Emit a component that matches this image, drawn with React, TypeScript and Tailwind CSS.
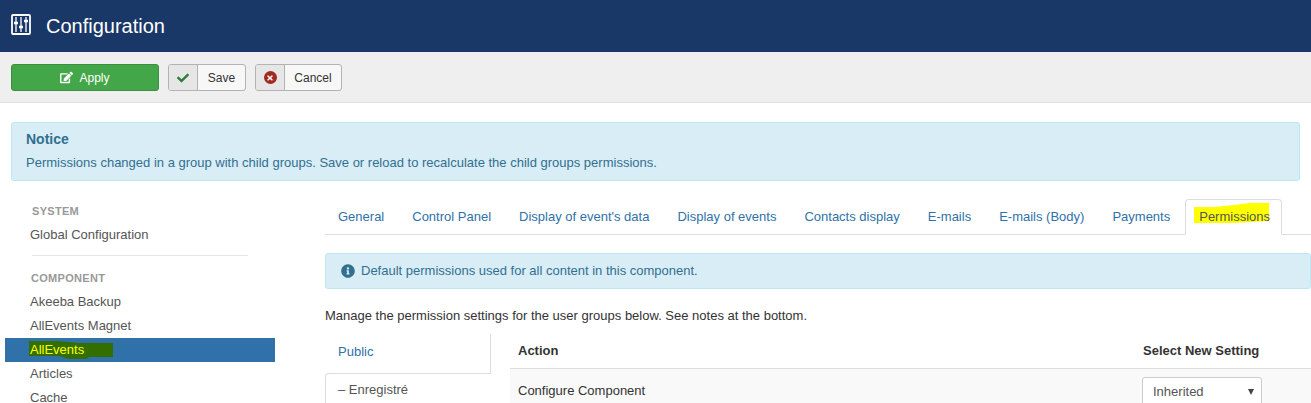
import React from "react";
import { FaCheck, FaEdit, FaTimes, FaInfoCircle } from "react-icons/fa";

const tabs = ["General", "Control Panel", "Display of event's data", "Display of events", "Contacts display", "E-mails", "E-mails (Body)", "Payments"];

function Item({ children }: { children: React.ReactNode }) {
  return <div className="h-6 leading-6 pl-[25px] text-[13px] text-[#555]">{children}</div>;
}

export default function App() {
  return (
    <div className="w-[1311px] h-[403px] overflow-hidden bg-white font-['Liberation_Sans',Arial,sans-serif] text-[13px] text-[#333]">
      <header className="h-[52px] bg-[#1a3867] flex items-center pl-[11px] text-white">
        <svg width="20" height="21" viewBox="0 0 20 21" fill="none" stroke="white" className="mb-[3px]">
          <rect x="1" y="1" width="18" height="19" rx="1" strokeWidth="1.8" />
          <path d="M5 3v15M10 3v15M15 3v15" strokeWidth="1.3" />
          <path d="M3 9h4M8 13h4M13 7h4" strokeWidth="2.4" />
        </svg>
        <h1 className="ml-[15px] text-[20px] leading-none font-normal">Configuration</h1>
      </header>

      <div className="h-[51px] bg-[#efefef] border-b border-[#e0e0e0] flex items-start pt-3 pl-[11px]">
        <button className="w-[148px] h-[27px] bg-[#43a648] border border-[#3b8f40] rounded-[3px] text-white text-xs flex items-center justify-center gap-[6px]">
          <FaEdit size={13} />
          Apply
        </button>
        <button className="ml-[9px] h-[27px] w-[78px] flex border border-[#b3b3b3] rounded-[3px] bg-[#f7f7f7] text-xs text-[#333] overflow-hidden">
          <span className="w-[29px] h-full bg-[#e6e6e6] border-r border-[#b3b3b3] flex items-center justify-center">
            <FaCheck size={12} className="text-[#2f7d3a]" />
          </span>
          <span className="flex-1 h-full flex items-center justify-center">Save</span>
        </button>
        <button className="ml-[9px] h-[27px] w-[87px] flex border border-[#b3b3b3] rounded-[3px] bg-[#f7f7f7] text-xs text-[#333] overflow-hidden">
          <span className="w-[29px] h-full bg-[#e6e6e6] border-r border-[#b3b3b3] flex items-center justify-center">
            <span className="w-[13px] h-[13px] rounded-full bg-[#a02a22] flex items-center justify-center">
              <FaTimes size={8} className="text-white" />
            </span>
          </span>
          <span className="flex-1 h-full flex items-center justify-center">Cancel</span>
        </button>
      </div>

      <div className="mt-[19px] mx-[11px] h-[59px] bg-[#d9edf7] border border-[#bce8f1] rounded-[3px] pl-[14px] pt-[7px] text-[#31708f]">
        <div className="text-[14px] leading-[18px] font-bold">Notice</div>
        <div className="mt-[5px] text-[13px] leading-[20px]">Permissions changed in a group with child groups. Save or reload to recalculate the child groups permissions.</div>
      </div>

      <div className="flex mt-[18px]">
        <aside className="ml-[5px] w-[270px] shrink-0">
          <div className="pl-[27px] h-[24px] leading-[24px] text-[11px] font-bold text-[#999] tracking-[0.3px]">SYSTEM</div>
          <Item>Global Configuration</Item>
          <div className="ml-[27px] w-[216px] mt-[8px] border-t border-[#e5e5e5]" />
          <div className="pl-[26px] mt-[10px] h-[24px] leading-[24px] text-[11px] font-bold text-[#999] tracking-[0.3px]">COMPONENT</div>
          <Item>Akeeba Backup</Item>
          <Item>AllEvents Magnet</Item>
          <div className="relative h-6 bg-[#3071a9] pl-[25px] leading-6">
            <svg width="90" height="24" viewBox="0 0 90 24" className="absolute left-[24px] top-0">
              <polygon points="0,3 28,3 50,5 84,5 84,19 60,19 58,21 40,21 30,18 0,18" fill="#336e00" />
            </svg>
            <span className="relative text-[#ffff00]">AllEvents</span>
          </div>
          <Item>Articles</Item>
          <Item>Cache</Item>
        </aside>

        <main className="ml-[50px] flex-1 min-w-0">
          <nav className="flex h-[36px] border-b border-[#ddd] text-[13px] text-[#3071a9]">
            <div className="flex">
              {tabs.map((t) => (
                <a key={t} className="px-[14px] first:pl-[13px] pt-[9px] leading-[18px] whitespace-nowrap">{t}</a>
              ))}
            </div>
            <div className="relative ml-[1px] w-[97px] h-[36px] border border-[#ddd] border-b-white rounded-t-[4px] bg-white pl-[13px] pt-[8px] leading-[18px] text-[#555]">
              <svg width="80" height="24" viewBox="0 0 80 24" className="absolute left-[8px] top-[2px]">
                <polygon points="0,5 20,5 40,3 56,1 75,1 75,19 40,21 0,21" fill="#ffff00" />
              </svg>
              <span className="relative">Permissions</span>
            </div>
          </nav>

          <div className="mt-[18px] h-[36px] bg-[#d9edf7] border border-[#bce8f1] rounded-[3px] flex items-center pl-[15px] text-[13px] text-[#31708f]">
            <FaInfoCircle size={14} />
            <span className="ml-[6px]">Default permissions used for all content in this component.</span>
          </div>

          <p className="mt-[18px] text-[13px] leading-[18px] text-[#333]">Manage the permission settings for the user groups below. See notes at the bottom.</p>

          <div className="flex mt-[9px]">
            <div className="w-[166px] shrink-0 text-[13px]">
              <div className="h-[39px] border-r border-[#ddd] pl-[13px] pt-[8px] text-[#3071a9]">Public</div>
              <div className="h-[40px] border border-r-0 border-[#ddd] rounded-tl-[4px] pl-[12px] pt-[6px] text-[#555]">– Enregistré</div>
            </div>
            <div className="ml-[19px] flex-1">
              <div className="h-[35px] border-b border-[#ddd] flex items-center pl-[8px] font-bold text-[13px]">
                <span className="w-[625px]">Action</span>
                <span>Select New Setting</span>
              </div>
              <div className="h-[50px] bg-[#f9f9f9] flex items-start pl-[8px] pt-[8px] text-[13px]">
                <span className="w-[624px] leading-[28px]">Configure Component</span>
                <div className="w-[120px] h-[30px] border border-[#ccc] rounded-[3px] bg-white flex items-center justify-between pl-[10px] pr-[7px] text-[#555]">
                  Inherited
                  <span className="w-0 h-0 border-l-[3px] border-r-[3px] border-t-[6px] border-l-transparent border-r-transparent border-t-[#444]" />
                </div>
              </div>
            </div>
          </div>
        </main>
      </div>
    </div>
  );
}
